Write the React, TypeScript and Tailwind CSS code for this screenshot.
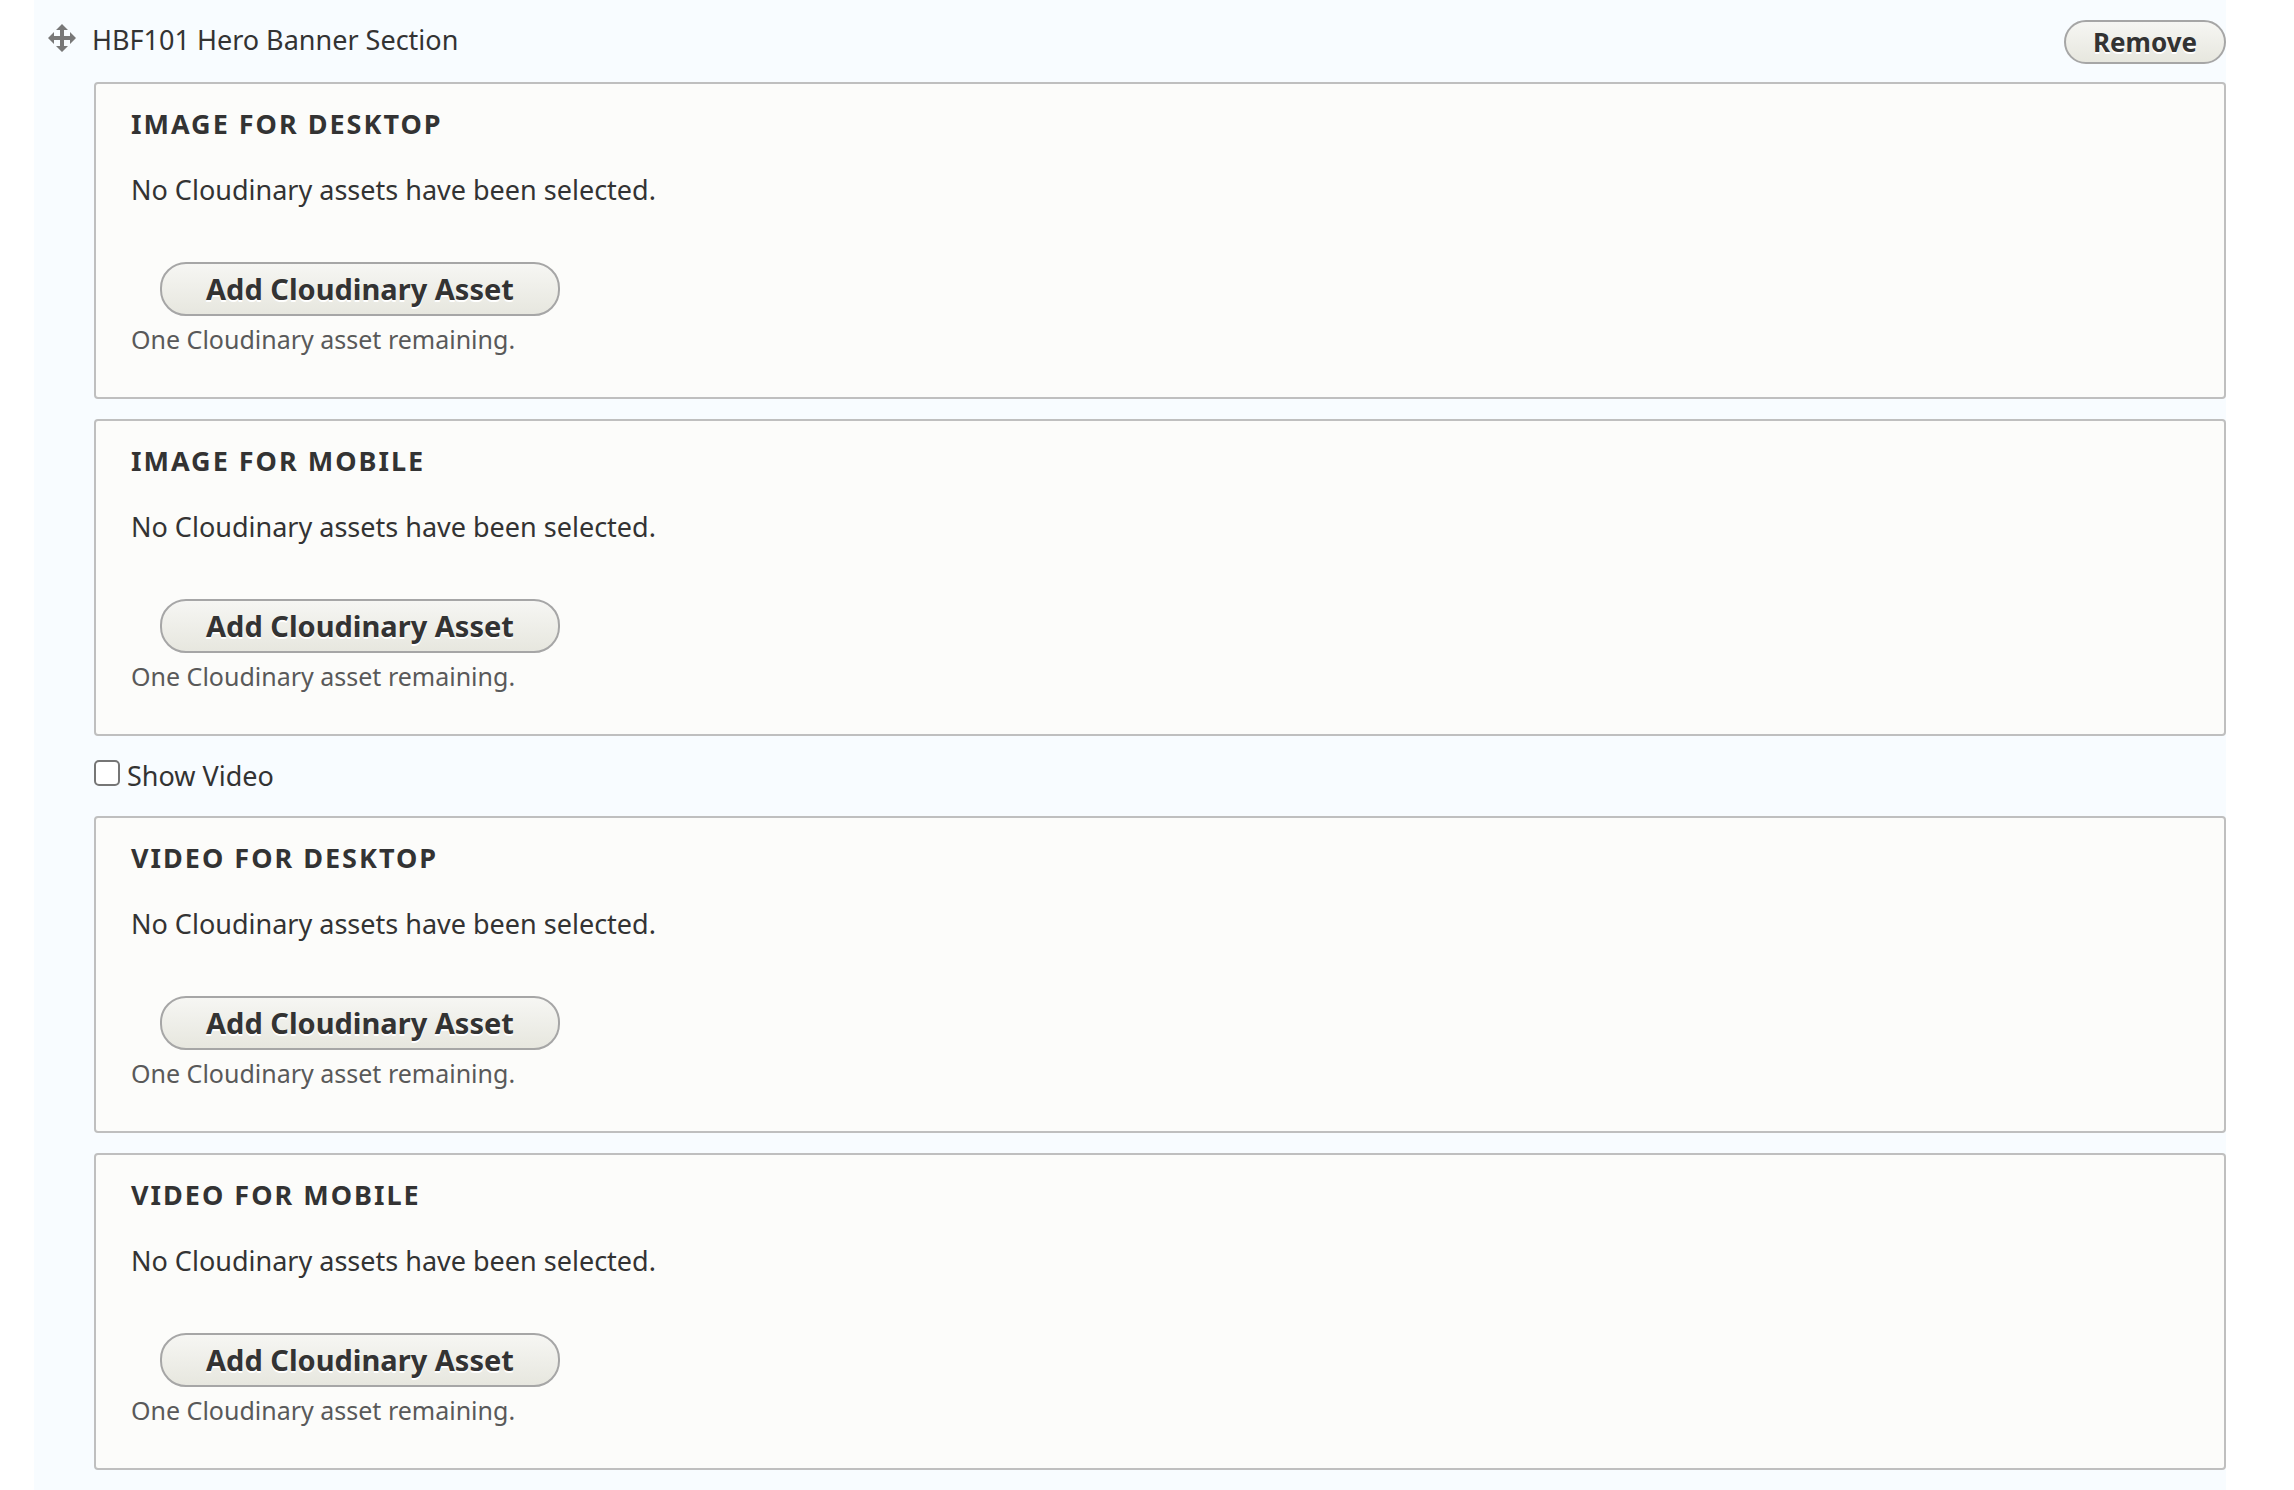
import React from 'react';

interface AssetFieldProps {
  id: string;
  title: string;
}

const imageFields: AssetFieldProps[] = [
  { id: 'image-desktop', title: 'Image for Desktop' },
  { id: 'image-mobile', title: 'Image for Mobile' },
];

const videoFields: AssetFieldProps[] = [
  { id: 'video-desktop', title: 'Video for Desktop' },
  { id: 'video-mobile', title: 'Video for Mobile' },
];

const buttonStyle =
  'border-2 border-[#a6a6a6] bg-linear-to-b from-[#f6f6f3] to-[#e7e7df] font-bold text-[#333] [text-shadow:0_2px_white] cursor-pointer hover:to-[#deded4]';

const AssetField: React.FC<AssetFieldProps> = ({ id, title }) => (
  <section aria-labelledby={id} className="rounded-[4px] border-2 border-[#bfbfbf] bg-[#fcfcfa] px-[35px] pt-[22px] pb-10">
    <h3 id={id} className="text-[27px] leading-9 font-bold uppercase tracking-[2px]">{title}</h3>
    <p className="mt-[30px] text-[27px] leading-9">No Cloudinary assets have been selected.</p>
    <button type="button" className={`${buttonStyle} mt-[54px] ml-[29px] block h-[54px] rounded-[26px] px-11 text-[29px] leading-9`}>
      Add Cloudinary Asset
    </button>
    <p className="mt-[5px] text-[25px] leading-9 text-[#595959]">One Cloudinary asset remaining.</p>
  </section>
);

const MoveIcon = () => (
  <svg viewBox="0 0 28 28" className="size-7" fill="#787878" aria-hidden="true">
    <path d="M14 0l6 6h-4v6h6V8l6 6-6 6v-4h-6v6h4l-6 6-6-6h4v-6H6v4l-6-6 6-6v4h6V6H8z" />
  </svg>
);

export default function App() {
  return (
    <div className="min-h-screen bg-white pr-[68px] pl-[34px] font-['Noto_Sans',sans-serif] text-[#333]">
      <div className="min-h-screen bg-[#f8fcff] pt-5 pl-[60px]">
        {/* Section header, the drag handle hangs in the left gutter */}
        <div className="-ml-[46px] flex items-start">
          <button type="button" aria-label="Drag to re-order" className="mt-1 mr-4 shrink-0 cursor-move px-0">
            <MoveIcon />
          </button>
          <h2 className="text-[27px] leading-10">HBF101 Hero Banner Section</h2>
          <button type="button" className={`${buttonStyle} ml-auto h-11 rounded-full px-[27px] text-[26px] leading-8`}>
            Remove
          </button>
        </div>

        <div className="mt-[18px] flex flex-col gap-5">
          {imageFields.map(field => <AssetField key={field.id} {...field} />)}
        </div>

        <div className="flex items-start gap-[7px] pt-[18px] pb-[18px]">
          <input id="show-video" type="checkbox" className="mt-[6px] size-[26px] appearance-none rounded-[5px] border-2 border-[#767676] bg-white checked:bg-[#0075ff]" />
          <label htmlFor="show-video" className="text-[27px] leading-11">Show Video</label>
        </div>

        <div className="flex flex-col gap-5 pb-5">
          {videoFields.map(field => <AssetField key={field.id} {...field} />)}
        </div>
      </div>
    </div>
  );
}
